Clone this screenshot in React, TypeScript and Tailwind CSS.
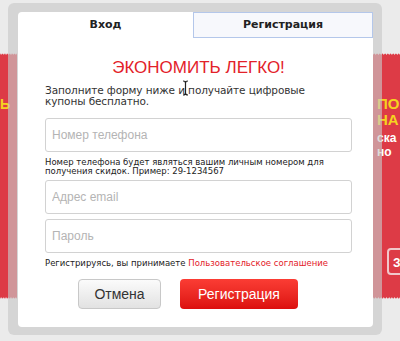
import React from 'react'

const Wave = ({ flip = false }: { flip?: boolean }) => (
  <svg
    width="30"
    height="5"
    viewBox="0 0 30 5"
    preserveAspectRatio="none"
    className={`block w-full h-[5px] ${flip ? 'rotate-180' : ''}`}
  >
    <path
      d="M0 5 L0 3 Q1.5 0 3 3 Q4.5 0 6 3 Q7.5 0 9 3 Q10.5 0 12 3 Q13.5 0 15 3 Q16.5 0 18 3 Q19.5 0 21 3 Q22.5 0 24 3 Q25.5 0 27 3 Q28.5 0 30 3 L30 5 Z"
      fill="#dd3b46"
    />
  </svg>
)

const Field = ({ placeholder }: { placeholder: string }) => (
  <input
    placeholder={placeholder}
    className="w-[307px] h-[34px] border border-[#d2d2d2] rounded-[3px] px-[6px] text-[12px] text-[#333] placeholder:text-[#b4b4b4] font-['Liberation_Sans',Arial,sans-serif] outline-none"
  />
)

export default function App() {
  return (
    <div className="relative w-[400px] h-[341px] bg-[#ebebeb] overflow-hidden font-['DejaVu_Sans',Verdana,sans-serif]">
      {/* promo banners behind the modal */}
      <div className="absolute left-0 top-[52px] w-[17px] flex flex-col">
        <Wave />
        <div className="h-[238px] bg-[#dd3b46] pt-[40px] overflow-hidden">
          <div className="text-[14px] font-bold text-[#f5d320] leading-none ml-[-10px] font-['Liberation_Sans',Arial,sans-serif]">СЬ</div>
        </div>
        <Wave flip />
      </div>
      <div className="absolute left-[373px] top-[52px] w-[27px] flex flex-col">
        <Wave />
        <div className="h-[238px] bg-[#dd3b46] pt-[39px] pl-[4px] overflow-hidden whitespace-nowrap font-['Liberation_Sans',Arial,sans-serif]">
          <div className="text-[15px] font-bold text-[#f5d320] leading-[16px]">ПО</div>
          <div className="text-[15px] font-bold text-[#f5d320] leading-[16px]">НА</div>
          <div className="text-[12px] font-bold text-white leading-[14px] mt-[3px]">ска</div>
          <div className="text-[12px] font-bold text-white leading-[14px]">но</div>
          <div className="mt-[89px] ml-[10px] w-[30px] h-[27px] border-2 border-[#f0c8cb] rounded-[4px] text-white text-[12px] font-bold pl-[4px] pt-[4px]">З</div>
        </div>
        <Wave flip />
      </div>

      {/* modal frame */}
      <div className="absolute left-[8px] top-[3px] w-[374px] h-[332px] bg-[rgba(200,200,200,0.64)] rounded-[6px] pl-[10px] pt-[9px]">
        <div className="w-[355px] h-[315px] bg-white rounded-[4px] flex flex-col">
          <div className="flex h-[26px] text-[11px] font-bold text-[#222]">
            <div className="w-[175px] flex items-center justify-center">Вход</div>
            <div className="w-[180px] flex items-center justify-center border border-[#b4c7ea] bg-[#f7f8fc]">Регистрация</div>
          </div>

          <div className="pl-[27px] pr-[21px] flex flex-col">
            <h1 className="mt-[20px] text-center text-[17px] leading-[20px] text-[#e32129] font-['Liberation_Sans',Arial,sans-serif]">
              ЭКОНОМИТЬ ЛЕГКО!
            </h1>
            <p className="relative mt-[7px] text-[10.5px] leading-[11px] text-[#333] tracking-[-0.1px]">
              Заполните форму ниже и получайте цифровые
              <br />
              купоны бесплатно.
              <svg className="absolute left-[137px] top-[-5px]" width="7" height="16" viewBox="0 0 7 16">
                <path d="M1 1 Q3.5 1 3.5 3 L3.5 13 Q3.5 15 1 15 M6 1 Q3.5 1 3.5 3 M3.5 13 Q3.5 15 6 15" stroke="#222" strokeWidth="1.2" fill="none" />
              </svg>
            </p>
            <div className="mt-[11px]">
              <Field placeholder="Номер телефона" />
            </div>
            <p className="mt-[6px] text-[8.5px] leading-[9px] text-[#222]">
              Номер телефона будет являться вашим личным номером для получения скидок. Пример: 29-1234567
            </p>
            <div className="mt-[4px] flex flex-col gap-[5px]">
              <Field placeholder="Адрес email" />
              <Field placeholder="Пароль" />
            </div>
            <p className="mt-[4px] text-[8.5px] leading-[12px] text-[#222] whitespace-nowrap">
              Регистрируясь, вы принимаете <span className="text-[#e32129]">Пользовательское соглашение</span>
            </p>
            <div className="mt-[10px] ml-[33px] flex gap-[19px] font-['Liberation_Sans',Arial,sans-serif]">
              <button className="w-[83px] h-[30px] rounded-[4px] border border-[#c8c8c8] bg-gradient-to-b from-[#fbfbfb] to-[#e2e2e2] text-[14px] text-[#333]">
                Отмена
              </button>
              <button className="w-[118px] h-[30px] rounded-[4px] bg-gradient-to-b from-[#fb3c34] to-[#dc0d0d] text-[14px] text-white">
                Регистрация
              </button>
            </div>
          </div>
        </div>
      </div>
    </div>
  )
}
